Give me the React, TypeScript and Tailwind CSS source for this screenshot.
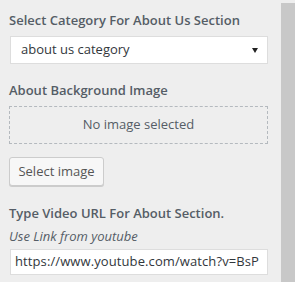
import React from 'react';

const font = { fontFamily: '"Open Sans", "Noto Sans", sans-serif' };

function Heading({ children, className = '' }: { children: React.ReactNode; className?: string }) {
  return (
    <div className={`text-[13px] leading-[20px] font-semibold text-[#555d66] ${className}`}>
      {children}
    </div>
  );
}

export default function App() {
  return (
    <div className="flex min-h-[282px] w-[295px] bg-[#eeeeee] overflow-hidden" style={font}>
      <div className="w-[281px] shrink-0 pl-[9px] pr-[13px] pt-[10px]">
        <Heading>Select Category For About Us Section</Heading>

        {/* category select */}
        <div className="mt-[6px] ml-px flex h-[28px] items-center justify-between border border-[#dddddd] bg-white pl-[10px] pr-[9px]">
          <span className="text-[13px] text-[#32373c]">about us category</span>
          <svg width="6" height="5" viewBox="0 0 6 5">
            <path d="M0 0 H6 L3 5 Z" fill="#222" />
          </svg>
        </div>

        <Heading className="mt-[16px]">About Background Image</Heading>

        {/* image placeholder */}
        <div className="mt-[6px] flex h-[38px] items-center justify-center border border-dashed border-[#b4b9be] text-[13px] text-[#555d66]">
          No image selected
        </div>

        <button className="mt-[13px] h-[29px] w-[95px] rounded-[3px] border border-[#cccccc] bg-[#f7f7f7] text-[13px] text-[#555555] shadow-[0_1px_0_#cccccc]">
          Select image
        </button>

        <Heading className="mt-[17px]">Type Video URL For About Section.</Heading>
        <div className="mt-[4px] text-[13px] leading-[18px] italic text-[#555d66]">Use Link from youtube</div>

        {/* video url input */}
        <div className="mt-[4px] ml-px flex h-[26px] items-center overflow-hidden border border-[#dddddd] bg-white pl-[4px]">
          <span className="whitespace-nowrap text-[13px] tracking-[0.1px] text-[#32373c]">
            https://www.youtube.com/watch?v=BsP
          </span>
        </div>
      </div>

      {/* scrollbar */}
      <div className="mt-[3px] w-[14px] bg-[#c8c8c8]" />
    </div>
  );
}
